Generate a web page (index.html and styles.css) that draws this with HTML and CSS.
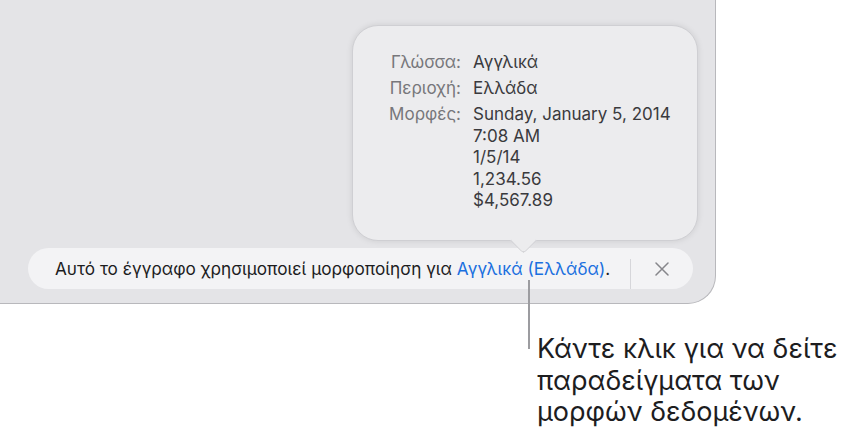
FILE: index.html
```html
<!DOCTYPE html>
<html lang="el">
<head>
  <meta charset="UTF-8" />
  <title>Μορφοποίηση περιοχής</title>
  <link rel="stylesheet" href="styles.css">
</head>
<body>
  <div class="window">
    <div class="popover">
      <div class="info">
        <span class="label">Γλώσσα:</span>
        <span class="value">Αγγλικά</span>
        <span class="label">Περιοχή:</span>
        <span class="value">Ελλάδα</span>
        <span class="label">Μορφές:</span>
        <span class="value">Sunday, January 5, 2014<br>7:08 AM<br>1/5/14<br>1,234.56<br>$4,567.89</span>
      </div>
    </div>
    <div class="notice">
      <p class="notice-text">Αυτό το έγγραφο χρησιμοποιεί μορφοποίηση για <a href="#" class="link">Αγγλικά (Ελλάδα)</a>.</p>
      <span class="divider"></span>
      <button class="close" aria-label="Κλείσιμο">
        <svg width="14" height="14" viewBox="0 0 14 14">
          <path d="M1 1 L13 13 M13 1 L1 13" stroke="#86868b" stroke-width="1.5" stroke-linecap="round" fill="none"/>
        </svg>
      </button>
    </div>
  </div>
  <span class="pointer"></span>
  <p class="callout">Κάντε κλικ για να δείτε<br>παραδείγματα των<br>μορφών δεδομένων.</p>
</body>
</html>
```

FILE: styles.css
```css
* {
  box-sizing: border-box;
}
body {
  margin: 0;
  width: 846px;
  height: 442px;
  background: #ffffff;
  font-family: 'Inter', 'Noto Sans', sans-serif;
  position: relative;
  overflow: hidden;
}
.window {
  width: 716px;
  height: 304px;
  background: #e4e4e7;
  border-right: 1px solid #b8b8bc;
  border-bottom: 1px solid #b8b8bc;
  border-bottom-right-radius: 28px;
  display: flex;
  flex-direction: column;
  align-items: flex-start;
}
.popover {
  position: relative;
  z-index: 2;
  margin: 25px 0 0 352px;
  width: 346px;
  height: 216px;
  background: #ececee;
  border: 1px solid #cfcfd3;
  border-radius: 26px;
  box-shadow: 0 0 6px rgba(0, 0, 0, 0.1);
  padding-top: 26px;
}
.popover::after {
  content: '';
  position: absolute;
  left: 161px;
  bottom: -10px;
  width: 18px;
  height: 18px;
  background: #ececee;
  border-right: 1px solid #cfcfd3;
  border-bottom: 1px solid #cfcfd3;
  border-bottom-right-radius: 4px;
  transform: rotate(45deg);
}
.info {
  display: grid;
  grid-template-columns: 108px 1fr;
  column-gap: 12px;
  row-gap: 4.5px;
  font-size: 17px;
  line-height: 21.5px;
}
.label {
  text-align: right;
  color: #77777b;
}
.value {
  color: #3a3a3d;
}
.notice {
  margin: 7px 0 0 28px;
  width: 665px;
  height: 41px;
  background: #f3f3f5;
  border-radius: 21px;
  display: flex;
  align-items: center;
}
.notice-text {
  flex: 1;
  margin: 0;
  padding-left: 27px;
  font-size: 17.2px;
  line-height: 41px;
  color: #1c1c1e;
  white-space: nowrap;
}
.link {
  color: #1a6fdf;
  text-decoration: none;
}
.divider {
  align-self: flex-end;
  width: 1px;
  height: 30px;
  background: #d6d6da;
}
.close {
  width: 62px;
  height: 41px;
  border: none;
  background: none;
  padding: 0;
  display: flex;
  align-items: center;
  justify-content: center;
}
.pointer {
  position: absolute;
  left: 528px;
  top: 280px;
  width: 2px;
  height: 69px;
  background: #9c9ca0;
}
.callout {
  margin: 29px 0 0 537px;
  font-size: 27px;
  line-height: 31.5px;
  color: #1d1d1f;
}
```
